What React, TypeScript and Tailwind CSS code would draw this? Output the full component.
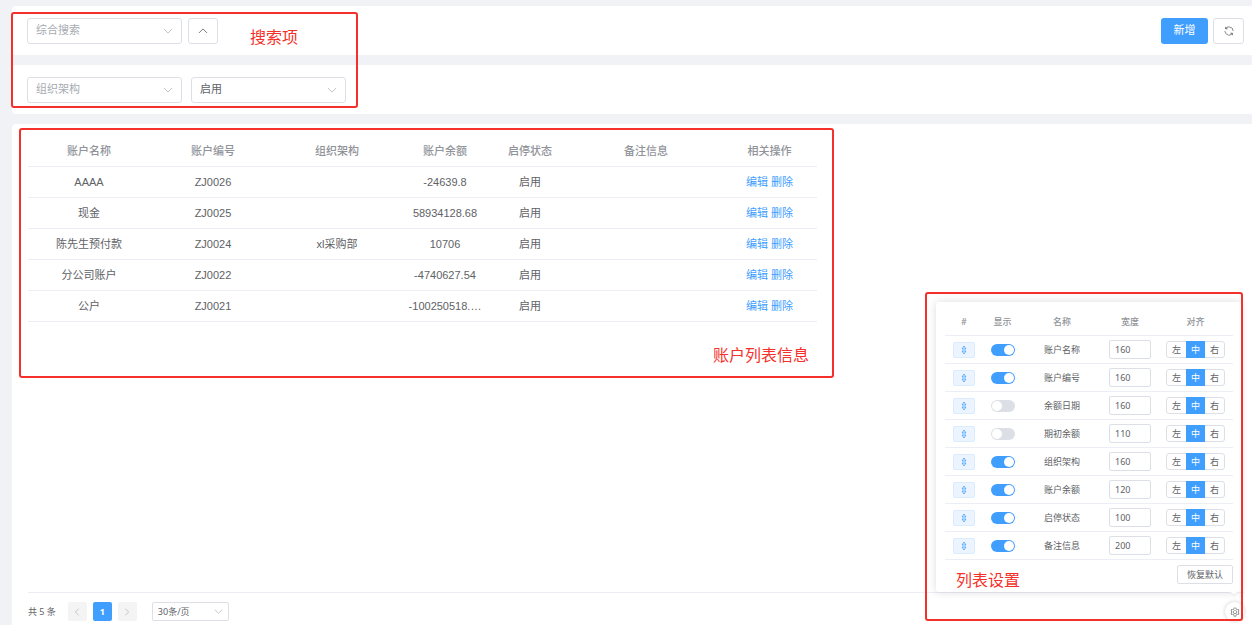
import { useState } from 'react'

const ACCOUNTS = [
  { name: 'AAAA', code: 'ZJ0026', org: '', balance: '-24639.8' },
  { name: '现金', code: 'ZJ0025', org: '', balance: '58934128.68' },
  { name: '陈先生预付款', code: 'ZJ0024', org: 'xl采购部', balance: '10706' },
  { name: '分公司账户', code: 'ZJ0022', org: '', balance: '-4740627.54' },
  { name: '公户', code: 'ZJ0021', org: '', balance: '-100250518.…' },
]

const HEADERS = [
  { label: '账户名称', width: 'w-[124px]' },
  { label: '账户编号', width: 'w-[124px]' },
  { label: '组织架构', width: 'w-[124px]' },
  { label: '账户余额', width: 'w-[92px]' },
  { label: '启停状态', width: 'w-[78px]' },
  { label: '备注信息', width: 'w-[154px]' },
  { label: '相关操作', width: 'w-[93px]' },
]

const COLUMNS = [
  { name: '账户名称', visible: true, width: '160' },
  { name: '账户编号', visible: true, width: '160' },
  { name: '余额日期', visible: false, width: '160' },
  { name: '期初余额', visible: false, width: '110' },
  { name: '组织架构', visible: true, width: '160' },
  { name: '账户余额', visible: true, width: '120' },
  { name: '启停状态', visible: true, width: '100' },
  { name: '备注信息', visible: true, width: '200' },
]

const ALIGNS = ['左', '中', '右']

function Chevron({ className, d }: { className: string; d: string }) {
  return (
    <svg className={className} fill="none" stroke="currentColor" viewBox="0 0 12 12" aria-hidden="true">
      <path strokeLinecap="round" strokeLinejoin="round" strokeWidth={1} d={d} />
    </svg>
  )
}

const DOWN = 'M1.5 4L6 8.5L10.5 4'
const UP = 'M1.5 8L6 3.5L10.5 8'
const LEFT = 'M8 1.5L3.5 6L8 10.5'
const RIGHT = 'M4 1.5L8.5 6L4 10.5'

function SearchSelect({ label, options, muted }: { label: string; options: string[]; muted?: boolean }) {
  return (
    <div className="relative w-[155px]">
      <select
        aria-label={label}
        className={`block w-full h-[26px] pl-2 pr-6 rounded-[3px] border border-[#dcdfe6] bg-white appearance-none text-[11px] outline-none ${muted ? 'text-[#a8abb2]' : 'text-[#606266]'}`}
      >
        {options.map((o) => (
          <option key={o}>{o}</option>
        ))}
      </select>
      <Chevron className="absolute right-[9px] top-2 w-[10px] h-[10px] text-[#b4b7bd] pointer-events-none" d={DOWN} />
    </div>
  )
}

function AccountTable() {
  return (
    <table className="w-[789px] table-fixed border-separate border-spacing-0 text-[11px] text-center">
      <thead>
        <tr className="h-[31px] text-[#909399]">
          {HEADERS.map((h) => (
            <th key={h.label} className={`${h.width} p-0 pr-[2px] font-medium border-b border-[#ebeef5]`}>{h.label}</th>
          ))}
        </tr>
      </thead>
      <tbody className="text-[#606266]">
        {ACCOUNTS.map((a) => (
          <tr key={a.code} className="h-[31px] *:p-0 *:pr-[2px] *:border-b *:border-[#ebeef5]">
            <td>{a.name}</td>
            <td>{a.code}</td>
            <td>{a.org}</td>
            <td>{a.balance}</td>
            <td>启用</td>
            <td></td>
            <td className="text-[#409eff]">
              <div className="pt-px">
                <a href="#edit">编辑</a> <a href="#delete">删除</a>
              </div>
            </td>
          </tr>
        ))}
      </tbody>
    </table>
  )
}

function ColumnSettings() {
  const [columns, setColumns] = useState(COLUMNS)

  function toggle(i: number) {
    setColumns(columns.map((c, n) => (n === i ? { ...c, visible: !c.visible } : c)))
  }

  return (
    <div className="absolute right-[11px] bottom-[33px] w-[305px] pt-1.5 pb-2 pl-[9px] pr-2 bg-white rounded-[3px] shadow-[0_0_9px_rgba(0,0,0,0.14)] text-[9px] font-['Noto_Sans','Noto_Sans_CJK_SC',sans-serif]">
      <table className="w-full table-fixed border-separate border-spacing-0 text-center">
        <thead>
          <tr className="h-7 text-[#909399] *:p-0 *:font-medium *:border-b *:border-[#ebeef5]">
            <th className="w-[38px]">#</th>
            <th className="w-[39px]">显示</th>
            <th className="w-[80px]">名称</th>
            <th className="w-[56px]">宽度</th>
            <th className="w-[75px]">对齐</th>
          </tr>
        </thead>
        <tbody className="text-[#606266]">
          {columns.map((c, i) => (
            <tr key={c.name} className="h-7 *:p-0 *:border-b *:border-[#ebeef5] *:align-middle">
              <td>
                <button
                  aria-label={`移动${c.name}`}
                  className="flex items-center justify-center mx-auto w-[22px] h-4 rounded-[2px] border border-[#d9ecff] bg-[#ecf5ff] text-[#409eff]"
                >
                  <svg className="w-[8px] h-[10px]" fill="none" stroke="currentColor" viewBox="0 0 8 10">
                    <path strokeLinejoin="round" strokeWidth={0.8} d="M4 1L6 4H2zM4 9L6 6H2z" />
                  </svg>
                </button>
              </td>
              <td>
                <input
                  type="checkbox"
                  aria-label={`显示${c.name}`}
                  checked={c.visible}
                  onChange={() => toggle(i)}
                  className="block mx-auto w-6 h-3 p-px rounded-full appearance-none bg-[#dcdfe6] checked:bg-[#409eff] before:block before:size-[10px] before:rounded-full before:bg-white checked:before:ml-3"
                />
              </td>
              <td>{c.name}</td>
              <td>
                <input
                  type="text"
                  aria-label={`${c.name}宽度`}
                  defaultValue={c.width}
                  className="block mx-auto w-[42px] h-[19px] px-[5px] rounded-[2px] border border-[#dcdfe6] bg-white outline-none"
                />
              </td>
              <td>
                <div className="flex w-[59px] h-[17px] mx-auto rounded-[3px] border border-[#dcdfe6] leading-[15px]">
                  {ALIGNS.map((a) => (
                    <label key={a} className="flex-1 has-checked:-my-px has-checked:py-px has-checked:bg-[#409eff] has-checked:text-white">
                      <input type="radio" name={`align-${i}`} value={a} defaultChecked={a === '中'} className="sr-only" />
                      {a}
                    </label>
                  ))}
                </div>
              </td>
            </tr>
          ))}
        </tbody>
      </table>
      <button
        onClick={() => setColumns(COLUMNS)}
        className="block mt-[5px] ml-auto w-14 h-[19px] rounded-[2px] border border-[#dcdfe6] bg-white text-[#606266]"
      >
        恢复默认
      </button>
      {/* Popover arrow */}
      <span className="absolute right-1 -bottom-[3px] size-[6px] rotate-45 bg-white border-r border-b border-[#e9ebf0]" />
    </div>
  )
}

export default function App() {
  return (
    <div className="min-h-screen flex flex-col gap-[10px] pt-1.5 pl-3 bg-[#f0f2f5] font-['Liberation_Sans','Noto_Sans_CJK_SC',sans-serif]">
      {/* Search bar */}
      <div className="relative flex flex-col gap-[10px]">
        <div className="flex items-center justify-between h-[49px] pl-[15px] pr-2 rounded-l bg-white">
          <div className="flex gap-[6px]">
            <SearchSelect label="综合搜索" options={['综合搜索']} muted />
            <button aria-label="收起" className="flex items-center justify-center w-[30px] h-[26px] rounded-[3px] border border-[#dcdfe6] text-[#606266]">
              <Chevron className="w-[10px] h-[10px]" d={UP} />
            </button>
          </div>
          <div className="flex gap-[5px]">
            <button className="w-[47px] h-[26px] rounded-[3px] bg-[#409eff] text-white text-[11px]">新增</button>
            <button aria-label="刷新" className="flex items-center justify-center w-[31px] h-[26px] rounded-[3px] border border-[#dcdfe6] text-[#606266]">
              <svg className="w-3 h-3" fill="currentColor" viewBox="0 0 1024 1024">
                <path d="M771.776 794.88A384 384 0 0 1 128 512h64a320 320 0 0 0 555.712 216.448H654.72a32 32 0 1 1 0-64h149.056a32 32 0 0 1 32 32v148.928a32 32 0 1 1-64 0v-50.56zM276.288 295.616h92.992a32 32 0 0 1 0 64H220.16a32 32 0 0 1-32-32V178.56a32 32 0 0 1 64 0v50.56A384 384 0 0 1 896.128 512h-64a320 320 0 0 0-555.776-216.384z" />
              </svg>
            </button>
          </div>
        </div>
        <div className="flex items-center gap-[9px] h-[49px] pl-[15px] rounded-l bg-white">
          <SearchSelect label="组织架构" options={['组织架构']} muted />
          <SearchSelect label="启停状态" options={['启用', '停用']} />
        </div>
        <div className="absolute -left-px top-[6px] w-[347px] h-24 border-2 border-[#f5302a] rounded-[3px] pointer-events-none">
          <span className="absolute left-[237px] top-3 text-base leading-6 text-[#f5302a]">搜索项</span>
        </div>
      </div>

      {/* Account list */}
      <div className="relative flex-1 flex flex-col justify-between pt-3 pl-4 pr-2 pb-1 rounded-tl bg-white">
        <AccountTable />
        <div className="flex items-center border-t border-[#ebeef5] pt-[9px] text-[9px] text-[#606266] font-['Noto_Sans','Noto_Sans_CJK_SC',sans-serif]">
          <span className="mr-3">共 5 条</span>
          <div className="flex gap-[6px]">
            <button aria-label="上一页" disabled className="flex items-center justify-center size-[19px] rounded-[2px] bg-[#f4f4f5] text-[#a8abb2]">
              <Chevron className="w-2 h-2" d={LEFT} />
            </button>
            <button className="size-[19px] rounded-[2px] bg-[#409eff] text-white font-bold">1</button>
            <button aria-label="下一页" disabled className="flex items-center justify-center size-[19px] rounded-[2px] bg-[#f4f4f5] text-[#a8abb2]">
              <Chevron className="w-2 h-2" d={RIGHT} />
            </button>
          </div>
          <div className="relative ml-[15px] w-[77px]">
            <select aria-label="每页条数" className="block w-full h-[19px] pl-[5px] pr-4 rounded-[2px] border border-[#dcdfe6] bg-white appearance-none outline-none">
              <option>30条/页</option>
            </select>
            <Chevron className="absolute right-[6px] top-[5px] w-[9px] h-[9px] text-[#b4b7bd] pointer-events-none" d={DOWN} />
          </div>
        </div>

        <button aria-label="列表设置" className="absolute right-2 bottom-1 flex items-center justify-center size-[19px] rounded-full bg-white shadow-[0_0_4px_rgba(0,0,0,0.2)] text-[#606266]">
          <svg className="w-[10px] h-[10px]" fill="currentColor" viewBox="0 0 1024 1024">
            <path d="M600.704 64a32 32 0 0 1 30.464 22.208l35.2 109.376c14.784 7.232 28.928 15.36 42.432 24.512l112.384-24.192a32 32 0 0 1 34.432 15.36L944.32 364.8a32 32 0 0 1-4.032 37.504l-77.12 85.12a357.12 357.12 0 0 1 0 49.024l77.12 85.248a32 32 0 0 1 4.032 37.504l-88.704 153.6a32 32 0 0 1-34.432 15.296L708.8 803.904c-13.44 9.088-27.648 17.28-42.368 24.512l-35.264 109.376A32 32 0 0 1 600.704 960H423.296a32 32 0 0 1-30.464-22.208L357.696 828.48a351.616 351.616 0 0 1-42.56-24.64l-112.32 24.256a32 32 0 0 1-34.432-15.36L79.68 659.2a32 32 0 0 1 4.032-37.504l77.12-85.248a357.12 357.12 0 0 1 0-48.896l-77.12-85.248A32 32 0 0 1 79.68 364.8l88.704-153.6a32 32 0 0 1 34.432-15.296l112.32 24.256c13.568-9.152 27.776-17.408 42.56-24.64l35.2-109.312A32 32 0 0 1 423.232 64H600.64zm-23.424 64H446.72l-36.352 113.088-24.512 11.968a294.113 294.113 0 0 0-34.816 20.096l-22.656 15.36-116.224-25.088-65.28 113.152 79.68 88.192-1.92 27.136a293.12 293.12 0 0 0 0 40.192l1.92 27.136-79.808 88.192 65.344 113.152 116.224-25.024 22.656 15.296a294.113 294.113 0 0 0 34.816 20.096l24.512 11.968L446.72 896h130.688l36.48-113.152 24.448-11.904a288.282 288.282 0 0 0 34.752-20.096l22.592-15.296 116.288 25.024 65.28-113.152-79.744-88.192 1.92-27.136a293.12 293.12 0 0 0 0-40.256l-1.92-27.136 79.808-88.128-65.344-113.152-116.288 24.96-22.592-15.232a287.616 287.616 0 0 0-34.752-20.096l-24.448-11.904L577.344 128zM512 320a192 192 0 1 1 0 384 192 192 0 0 1 0-384zm0 64a128 128 0 1 0 0 256 128 128 0 0 0 0-256z" />
          </svg>
        </button>
        <ColumnSettings />

        {/* Callouts */}
        <div className="absolute left-[7px] top-1 w-[815px] h-[250px] border-2 border-[#f5302a] rounded-[3px] pointer-events-none">
          <span className="absolute right-[23px] bottom-2 text-base leading-6 text-[#f5302a]">账户列表信息</span>
        </div>
        <div className="absolute right-[9px] bottom-1 w-[318px] h-[329px] border-2 border-[#f5302a] rounded-[3px] pointer-events-none">
          <span className="absolute left-[29px] bottom-[26px] text-base leading-6 text-[#f5302a]">列表设置</span>
        </div>
      </div>
    </div>
  )
}
